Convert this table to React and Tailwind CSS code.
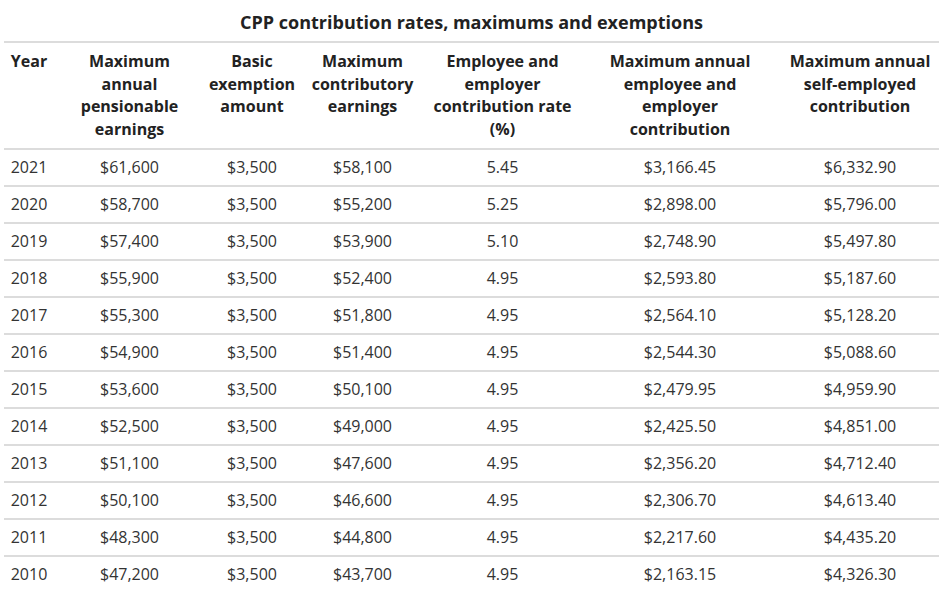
const rows = [
  ['2021', '$61,600', '$3,500', '$58,100', '5.45', '$3,166.45', '$6,332.90'],
  ['2020', '$58,700', '$3,500', '$55,200', '5.25', '$2,898.00', '$5,796.00'],
  ['2019', '$57,400', '$3,500', '$53,900', '5.10', '$2,748.90', '$5,497.80'],
  ['2018', '$55,900', '$3,500', '$52,400', '4.95', '$2,593.80', '$5,187.60'],
  ['2017', '$55,300', '$3,500', '$51,800', '4.95', '$2,564.10', '$5,128.20'],
  ['2016', '$54,900', '$3,500', '$51,400', '4.95', '$2,544.30', '$5,088.60'],
  ['2015', '$53,600', '$3,500', '$50,100', '4.95', '$2,479.95', '$4,959.90'],
  ['2014', '$52,500', '$3,500', '$49,000', '4.95', '$2,425.50', '$4,851.00'],
  ['2013', '$51,100', '$3,500', '$47,600', '4.95', '$2,356.20', '$4,712.40'],
  ['2012', '$50,100', '$3,500', '$46,600', '4.95', '$2,306.70', '$4,613.40'],
  ['2011', '$48,300', '$3,500', '$44,800', '4.95', '$2,217.60', '$4,435.20'],
  ['2010', '$47,200', '$3,500', '$43,700', '4.95', '$2,163.15', '$4,326.30'],
];

const headers = [
  ['Year'],
  ['Maximum', 'annual', 'pensionable', 'earnings'],
  ['Basic', 'exemption', 'amount'],
  ['Maximum', 'contributory', 'earnings'],
  ['Employee and', 'employer', 'contribution rate', '(%)'],
  ['Maximum annual', 'employee and', 'employer', 'contribution'],
  ['Maximum annual', 'self-employed', 'contribution'],
];

export default function App() {
  return (
    <div className="bg-white min-h-screen pl-[4px] pr-[1px] text-[#333]" style={{ fontFamily: "'Open Sans', 'Noto Sans', sans-serif" }}>
      <table className="w-[935px] table-fixed border-collapse text-[16px] leading-[23px]">
        <caption className="text-[18px] font-bold leading-[24px] pt-[10px] pb-[7px] text-center text-[#222]">
          CPP contribution rates, maximums and exemptions
        </caption>
        <colgroup>
          <col className="w-[50px]" />
          <col className="w-[151px]" />
          <col className="w-[94px]" />
          <col className="w-[127px]" />
          <col className="w-[153px]" />
          <col className="w-[202px]" />
          <col className="w-[158px]" />
        </colgroup>
        <thead>
          <tr className="border-t-2 border-b-2 border-[#dcdcdc]">
            {headers.map((h, i) => (
              <th key={i} className="align-top text-center font-bold leading-[22.5px] pt-[7px] pb-[8px] px-0 text-[#222]">
                {h.map((line, j) => (
                  <div key={j} className="whitespace-nowrap">{line}</div>
                ))}
              </th>
            ))}
          </tr>
        </thead>
        <tbody>
          {rows.map((r) => (
            <tr key={r[0]} className="border-b-2 border-[#dcdcdc] last:border-b-0">
              {r.map((c, i) => (
                <td key={i} className="text-center py-[6px] px-0 whitespace-nowrap">
                  {c}
                </td>
              ))}
            </tr>
          ))}
        </tbody>
      </table>
    </div>
  );
}
